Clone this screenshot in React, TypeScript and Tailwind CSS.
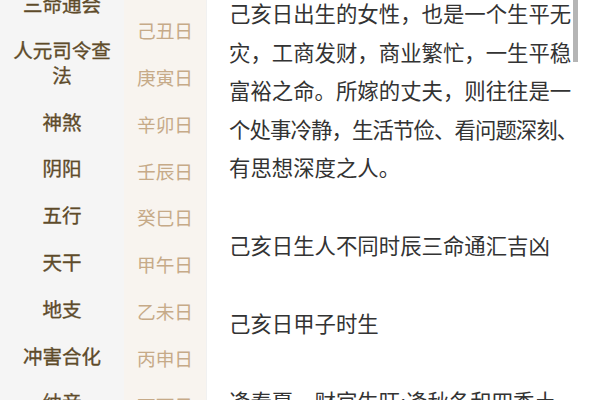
const categories = [
  '三命通会',
  '人元司令查法',
  '神煞',
  '阴阳',
  '五行',
  '天干',
  '地支',
  '冲害合化',
  '纳音',
];

const days = ['戊子日', '己丑日', '庚寅日', '辛卯日', '壬辰日', '癸巳日', '甲午日', '乙未日', '丙申日', '丁酉日'];

const paragraphs: string[][] = [
  [
    '己亥日出生的女性，也是一个生平无',
    '灾，工商发财，商业繁忙，一生平稳',
    '富裕之命。所嫁的丈夫，则往往是一',
    '个处事冷静，生活节俭、看问题深刻、',
    '有思想深度之人。',
  ],
  ['己亥日生人不同时辰三命通汇吉凶'],
  ['己亥日甲子时生'],
  ['逢春夏，财官生旺;逢秋冬和四季土'],
];

export default function App() {
  return (
    <div
      className="relative flex h-[400px] w-[600px] overflow-hidden bg-white"
      style={{ fontFamily: '"Noto Sans CJK SC", "Noto Sans", sans-serif' }}
    >
      {/* Category menu */}
      <div className="w-[124px] shrink-0 bg-[#f5f5f5]">
        <div className="-mt-[19.5px]">
          {categories.map(c => (
            <div
              key={c}
              className="px-[12px] py-[11.2px] text-center text-[19.5px] leading-[24.4px] text-[#5e4b2a] [-webkit-text-stroke:0.35px_#5e4b2a]"
            >
              {c}
            </div>
          ))}
        </div>
      </div>

      {/* Day list */}
      <div className="w-[82px] shrink-0 bg-[#f8f4ef]">
        <div className="-mt-[40px]">
          {days.map(d => (
            <div
              key={d}
              className="flex h-[46.8px] items-center justify-center text-[18.7px] text-[#c6aa88]"
            >
              {d}
            </div>
          ))}
        </div>
      </div>

      {/* Article */}
      <div className="flex-1 border-l border-[#f1f1f1] pl-[22px] text-[21.4px] leading-[38.5px] text-[#333333]">
        <div className="-mt-[5.75px] space-y-[39.5px]">
          {paragraphs.map((p, i) => (
            <div key={i}>
              {p.map((line, j) => (
                <div
                  key={j}
                  className={`whitespace-nowrap ${line.length > 16 ? 'tracking-[-0.9px]' : ''}`}
                >
                  {line}
                </div>
              ))}
            </div>
          ))}
        </div>
      </div>

      {/* Scroll thumb */}
      <div className="absolute left-[573px] top-0 h-[62px] w-[5px] bg-[#b5b5b5]" />
    </div>
  );
}
